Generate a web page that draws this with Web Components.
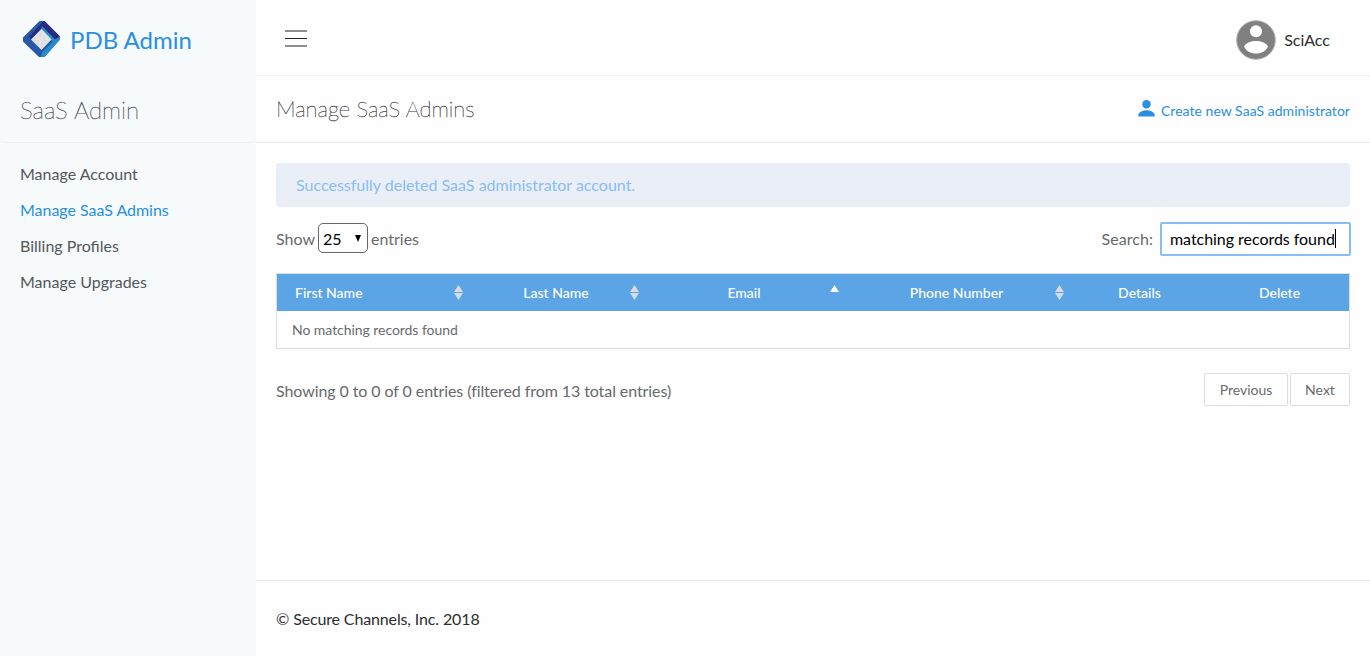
<!DOCTYPE html>
<html lang="en">
<head>
<meta charset="utf-8">
<title>PDB Admin</title>
<style>
html,body{margin:0;height:100%;background:#fff}
body{font-family:Lato,"Liberation Sans",sans-serif;font-size:16px;color:#676a6c;overflow:hidden}
</style>
</head>
<body>
<admin-app>
  <side-bar slot="side" heading="SaaS Admin" brand="PDB Admin">
    <nav-item>Manage Account</nav-item>
    <nav-item active>Manage SaaS Admins</nav-item>
    <nav-item>Billing Profiles</nav-item>
    <nav-item>Manage Upgrades</nav-item>
  </side-bar>
  <top-bar>SciAcc</top-bar>
  <page-title heading="Manage SaaS Admins">Create new SaaS administrator</page-title>
  <main-panel>
    <alert-box>Successfully deleted SaaS administrator account.</alert-box>
    <table-tools></table-tools>
    <data-table>No matching records found</data-table>
    <table-pager>Showing 0 to 0 of 0 entries (filtered from 13 total entries)</table-pager>
  </main-panel>
  <page-footer>© Secure Channels, Inc. 2018</page-footer>
</admin-app>
<script>
const define = (name, css, html) => customElements.define(name, class extends HTMLElement {
  constructor() {
    super();
    const attr = n => this.getAttribute(n) || '';
    this.attachShadow({mode: 'open'}).innerHTML =
      `<style>*{box-sizing:border-box}:host{display:block;box-sizing:border-box}${css}</style>` +
      (typeof html === 'function' ? html(attr) : html);
  }
});

define('admin-app', `
  :host{display:grid;grid-template-columns:256px 1fr;width:100%;height:100vh;min-height:656px}
  .main{display:flex;flex-direction:column;min-width:0;background:#fefefe}
`, `<slot name="side"></slot><div class="main"><slot></slot></div>`);

define('side-bar', `
  :host{background:#f6fafb;color:#54575a}
  .brand{display:flex;align-items:center;height:79px;padding-left:22px;color:#2a8fe3;font-size:24px;line-height:30px}
  .brand svg{margin:-1px 9px 0 0}
  h2{margin:0;height:64px;padding:15px 20px 0;font-size:24px;line-height:32px;font-weight:200;color:#54575a;-webkit-text-stroke:.4px #54575a;letter-spacing:.05px;border-bottom:1px solid #edf1f3;border-radius:0 0 5px 5px}
  nav{padding-top:13px}
`, a => `<div class="brand">
  <svg width="39" height="38" viewBox="0 0 39 38">
    <path d="M17.500 1h5L37.500 16v4L22.500 37h-5.500L1 21.500v-4z" fill="#2857aa"/>
    <path d="M21 1h1.500L37.500 16v4L31 19 20 7.500 9.500 19.500 7 17 17 6z" fill="#292b83"/>
    <path d="M37.500 17v3L22.500 37H19l1-4.500L33 19.500z" fill="#278ccb"/>
    <path d="M20 6L33 19.500 31 22 19 10z" fill="#278ccb"/>
    <path d="M19.500 9L29.500 19.500 19.500 30 9 19.500z" fill="#e3e5e7"/>
    <path d="M18 13v5m4-3v6m-6-1v6m4-4v6m4-8v5m-11-7v4" stroke="#d0d4d8" stroke-width="1"/>
  </svg><span>${a('brand')}</span></div>
  <h2>${a('heading')}</h2><nav><slot></slot></nav>`);

define('nav-item', `
  :host{height:36px;line-height:36px;padding-left:20px;cursor:pointer}
  :host([active]){color:#2a8fe3;letter-spacing:-.03px}
`, `<slot></slot>`);

define('top-bar', `
  :host{display:flex;align-items:center;justify-content:space-between;height:76px;padding:4px 40px 0 29px;border-bottom:1px solid #f3f3f5;color:#2c2d2e}
  .menu{margin-top:-1px}
  .user{display:flex;align-items:center;gap:8px}
  svg{display:block}
`, `<svg class="menu" width="22" height="18" viewBox="0 0 22 18"><path d="M0 1h22M0 8.500h22M0 16h22" stroke="#1d1e20" stroke-width="1.200"/></svg>
  <div class="user"><svg width="41" height="40" viewBox="0 0 41 40">
    <circle cx="21" cy="20" r="19.300" fill="#808080" stroke="#a9b0b7" stroke-width="1"/>
    <circle cx="21" cy="11.200" r="6" fill="#fff"/>
    <path d="M9 26.500C11 22.800 16 21 21 21s10 1.800 12 5.500C31 31 26.500 33.500 21 33.500S11 31 9 26.500z" fill="#fff"/>
  </svg><span><slot></slot></span></div>`);

define('page-title', `
  :host{display:flex;justify-content:space-between;height:67px;padding:0 20px;border-bottom:1px solid #e9ebf2}
  h1{margin:0;padding-top:17px;font-size:22px;line-height:32px;font-weight:200;color:#3c3d3f;-webkit-text-stroke:.35px #3c3d3f}
  .new{display:flex;height:20px;margin-top:25px;font-size:14px;line-height:20px;letter-spacing:.035px;color:#2a8fe3}
  svg{margin:-1px 6px 0 0}
`, a => `<h1>${a('heading')}</h1><div class="new"><svg width="17" height="17" viewBox="0 0 17 17" fill="#2a8fe3"><circle cx="8.500" cy="4.200" r="4.200"/><path d="M.3 16.500v-1.500C.3 12 5.500 10.300 8.500 10.300s8.200 1.700 8.200 4.700v1.500z"/></svg><slot></slot></div>`);

define('main-panel', `:host{padding:20px 20px 0}`, `<slot></slot>`);

define('alert-box', `
  :host{height:44px;line-height:43px;padding-left:20px;border-radius:4px;background:#eaeff7;color:#87bdf8}
`, `<slot></slot>`);

define('table-tools', `
  :host{display:flex;justify-content:space-between;height:35px;margin-top:15px;line-height:34px}
  .length,.search{display:flex}
  .select{display:flex;justify-content:space-between;width:50px;height:30px;margin:1px 3px 0;padding:0 6px 0 4px;border:1px solid #666;border-radius:5px;background:#fff;color:#000;line-height:29px}
  .select svg{margin-top:11px}
  .input{display:flex;width:191px;height:34px;margin:0 -1px 0 7px;padding-left:8px;border:2px solid #87bdf8;border-radius:2px;background:#fff;color:#000;line-height:29px;white-space:nowrap;letter-spacing:-.04px}
  .search{letter-spacing:.06px}
  .input i{width:1px;height:19px;margin-top:5px;background:#000}
`, `<div class="length"><span>Show</span><div class="select"><span>25</span><svg width="6" height="7" viewBox="0 0 6 7"><path d="M0 0h6L3 7z"/></svg></div><span>entries</span></div>
  <div class="search"><span>Search:</span><div class="input"><span>matching records found</span><i></i></div></div>`);

define('sort-icon', `
  :host{width:9px;height:15px;color:#d8dcdf}
  svg{display:block}
  .down{display:inline}
  :host([asc]){color:#fff}
  :host([asc]) .down{display:none}
`, `<svg width="9" height="15" viewBox="0 0 9 15" fill="currentColor"><path d="M0 7L4.500 0 9 7z"/><path class="down" d="M0 8h9l-4.500 7z"/></svg>`);

define('data-table', `
  :host{height:76px;margin-top:16px;border:1px solid #ddd;background:#fff;font-size:14px}
  .head{display:grid;grid-template-columns:191px 176px 200px 225px 141px 1fr;height:37px;background:#5ba4e6;color:#fff;font-weight:500}
  .head div{display:flex;align-items:center;justify-content:center;position:relative}
  .head .first{justify-content:flex-start;padding-left:18px}
  sort-icon{position:absolute;right:5px;top:11px}
  .row{height:37px;line-height:37px;padding-left:15px;letter-spacing:-.05px}
`, `<div class="head"><div class="first"><span>First Name</span><sort-icon></sort-icon></div><div><span>Last Name</span><sort-icon></sort-icon></div><div><span>Email</span><sort-icon asc></sort-icon></div><div><span>Phone Number</span><sort-icon></sort-icon></div><div><span>Details</span></div><div><span>Delete</span></div></div>
  <div class="row"><slot></slot></div>`);

define('table-pager', `
  :host{display:flex;justify-content:space-between;margin-top:24px;line-height:36px;letter-spacing:-.085px}
  .pages{display:flex;gap:2px;font-size:14px;line-height:32px;letter-spacing:0}
  .pages div{height:33px;border:1px solid #ddd;border-radius:2px;text-align:center;background:#fff}
  .prev{width:84px}.next{width:60px}
`, `<span><slot></slot></span><div class="pages"><div class="prev">Previous</div><div class="next">Next</div></div>`);

define('page-footer', `
  :host{height:76px;margin-top:auto;padding-left:20px;border-top:1px solid #e7eaf3;line-height:75px;letter-spacing:-.135px;color:#2c2d2e}
`, `<slot></slot>`);
</script>
</body>
</html>
